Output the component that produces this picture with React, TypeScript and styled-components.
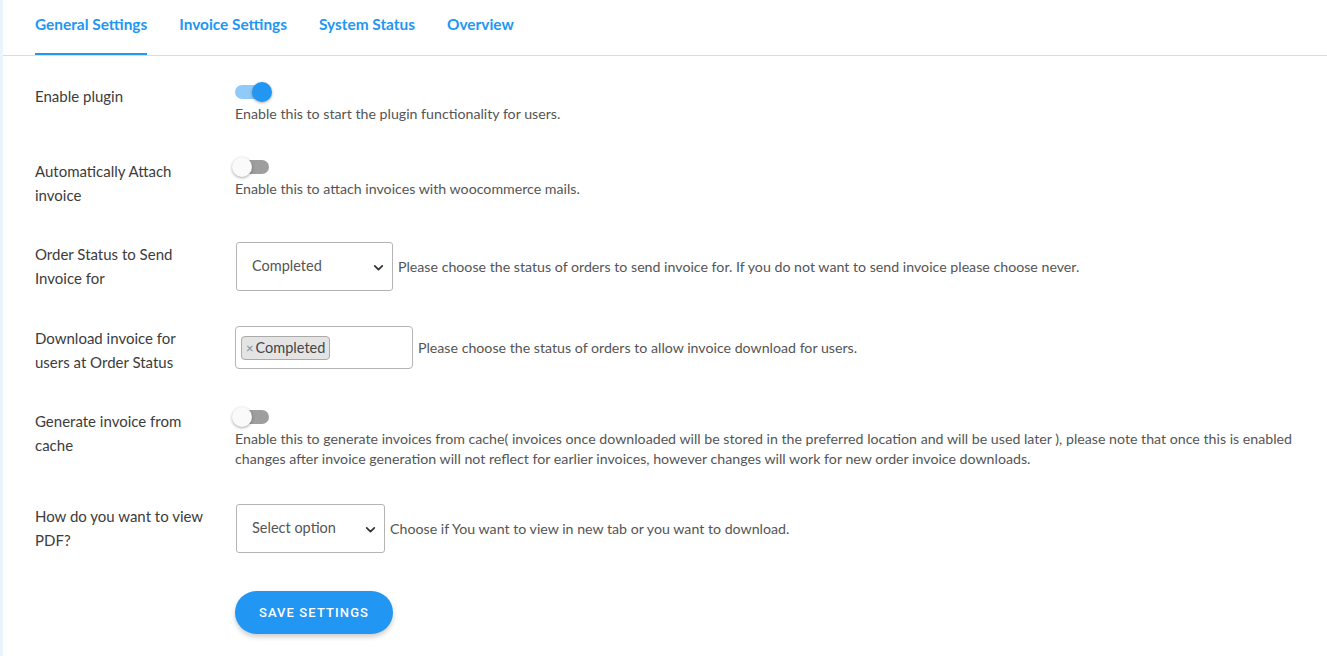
import React, { useState } from 'react';
import styled, { createGlobalStyle } from 'styled-components';

const GlobalStyle = createGlobalStyle`
  html, body {
    margin: 0;
    padding: 0;
    background: #eaf4fd;
  }
  body {
    font-family: Lato, "Noto Sans", "Liberation Sans", sans-serif;
    color: #444;
  }
`;

const tabs = ['General Settings', 'Invoice Settings', 'System Status', 'Overview'];

const App = () => {
  const [active, setActive] = useState(0);
  const [plugin, setPlugin] = useState(true);
  const [attach, setAttach] = useState(false);
  const [cache, setCache] = useState(false);

  return (
    <Page>
      <GlobalStyle />
      <TabBar>
        {tabs.map((t, i) => (
          <Tab key={t} $active={i === active} onClick={() => setActive(i)}>{t}</Tab>
        ))}
      </TabBar>

      <Form>
        <Row>
          <Label>Enable plugin</Label>
          <Field>
            <Switch $on={plugin} onClick={() => setPlugin(!plugin)}><Thumb $on={plugin} /></Switch>
            <Help>Enable this to start the plugin functionality for users.</Help>
          </Field>
        </Row>

        <Row>
          <Label>Automatically Attach invoice</Label>
          <Field>
            <Switch $on={attach} onClick={() => setAttach(!attach)}><Thumb $on={attach} /></Switch>
            <Help>Enable this to attach invoices with woocommerce mails.</Help>
          </Field>
        </Row>

        <Row>
          <Label>Order Status to Send Invoice for</Label>
          <InlineField>
            <SelectBox $width={157}>
              <span>Completed</span>
              <Chevron />
            </SelectBox>
            <Help>Please choose the status of orders to send invoice for. If you do not want to send invoice please choose never.</Help>
          </InlineField>
        </Row>

        <Row>
          <Label>Download invoice for users at Order Status</Label>
          <InlineField>
            <MultiBox>
              <Chip><Remove>×</Remove>Completed</Chip>
            </MultiBox>
            <Help>Please choose the status of orders to allow invoice download for users.</Help>
          </InlineField>
        </Row>

        <Row>
          <Label>Generate invoice from cache</Label>
          <Field>
            <Switch $on={cache} onClick={() => setCache(!cache)}><Thumb $on={cache} /></Switch>
            <Help>
              Enable this to generate invoices from cache( invoices once downloaded will be stored in the preferred location and will be used later ), please note that once this is enabled changes after invoice generation will not reflect for earlier invoices, however changes will work for new order invoice downloads.
            </Help>
          </Field>
        </Row>

        <Row>
          <Label>How do you want to view PDF?</Label>
          <InlineField>
            <SelectBox $width={149}>
              <span>Select option</span>
              <Chevron />
            </SelectBox>
            <Help>Choose if You want to view in new tab or you want to download.</Help>
          </InlineField>
        </Row>

        <ButtonRow>
          <SaveButton>Save Settings</SaveButton>
        </ButtonRow>
      </Form>
    </Page>
  );
};

const Chevron = () => (
  <svg width="13" height="13" viewBox="0 0 12 12">
    <path d="M2.5 4.5 L6 8 L9.5 4.5" fill="none" stroke="#333" strokeWidth="1.6" strokeLinecap="round" strokeLinejoin="round" />
  </svg>
);

export default App;

const Page = styled.div`
  margin-left: 3px;
  min-height: 656px;
  background: #fff;
`;

const TabBar = styled.div`
  display: flex;
  gap: 32px;
  padding-left: 32px;
  height: 55px;
  border-bottom: 1px solid #dcdcdc;
`;

const Tab = styled.div<{ $active: boolean }>`
  display: flex;
  align-items: center;
  height: 100%;
  box-sizing: border-box;
  padding-bottom: 6px;
  font-size: 15.4px;
  font-weight: 700;
  color: #2196f3;
  cursor: pointer;
  border-bottom: 2px solid ${p => (p.$active ? '#2196f3' : 'transparent')};
  margin-bottom: -1px;
`;

const Form = styled.div`
  padding: 11px 30px 0 32px;
`;

const Row = styled.div`
  display: flex;
  align-items: flex-start;
  padding: 17px 0 18px;
`;

const Label = styled.div`
  width: 174px;
  flex: none;
  margin-right: 26px;
  font-size: 15px;
  line-height: 24px;
  color: #3c3c3c;
`;

const Field = styled.div`
  flex: 1;
  display: flex;
  flex-direction: column;
  align-items: flex-start;
  margin-top: -2px;
`;

const InlineField = styled.div`
  flex: 1;
  display: flex;
  align-items: center;
  gap: 5px;
`;

const Help = styled.div`
  font-size: 14.2px;
  line-height: 20px;
  color: #555;
`;

const Switch = styled.div<{ $on: boolean }>`
  position: relative;
  width: 34px;
  height: 14px;
  margin: 3px 0 5px 0;
  border-radius: 7px;
  background: ${p => (p.$on ? '#90caf9' : '#9e9e9e')};
  cursor: pointer;
`;

const Thumb = styled.span<{ $on: boolean }>`
  position: absolute;
  top: -3px;
  left: ${p => (p.$on ? '17px' : '-3px')};
  width: 20px;
  height: 20px;
  border-radius: 50%;
  background: ${p => (p.$on ? '#2196f3' : '#fafafa')};
  box-shadow: 0 1px 3px rgba(0, 0, 0, 0.35);
`;

const SelectBox = styled.div<{ $width: number }>`
  width: ${p => p.$width}px;
  height: 49px;
  margin-left: 1px;
  box-sizing: border-box;
  display: flex;
  align-items: center;
  justify-content: space-between;
  padding: 0 7px 0 15px;
  border: 1px solid #b4b4b4;
  border-radius: 3px;
  font-size: 14.5px;
  color: #555;
  span {
    margin-top: -3px;
  }
  svg {
    margin-top: 2px;
  }
`;

const MultiBox = styled.div`
  width: 178px;
  height: 43px;
  box-sizing: border-box;
  display: flex;
  align-items: center;
  padding: 0 5px;
  border: 1px solid #b4b4b4;
  border-radius: 4px;
`;

const Chip = styled.span`
  display: inline-flex;
  align-items: center;
  height: 24px;
  padding: 0 4px;
  box-sizing: border-box;
  background: #e4e4e4;
  border: 1px solid #aaa;
  border-radius: 4px;
  font-size: 14.5px;
  color: #444;
`;

const Remove = styled.span`
  color: #888;
  margin-right: 2px;
  font-size: 13px;
`;

const ButtonRow = styled.div`
  padding: 20px 0 0 200px;
`;

const SaveButton = styled.button`
  width: 158px;
  height: 43px;
  border: none;
  border-radius: 22px;
  background: #2196f3;
  color: #fff;
  font-family: Roboto, "Liberation Sans", sans-serif;
  font-size: 13px;
  font-weight: 500;
  letter-spacing: 1.1px;
  text-transform: uppercase;
  box-shadow: 0 3px 5px rgba(0, 0, 0, 0.2);
  cursor: pointer;
`;
